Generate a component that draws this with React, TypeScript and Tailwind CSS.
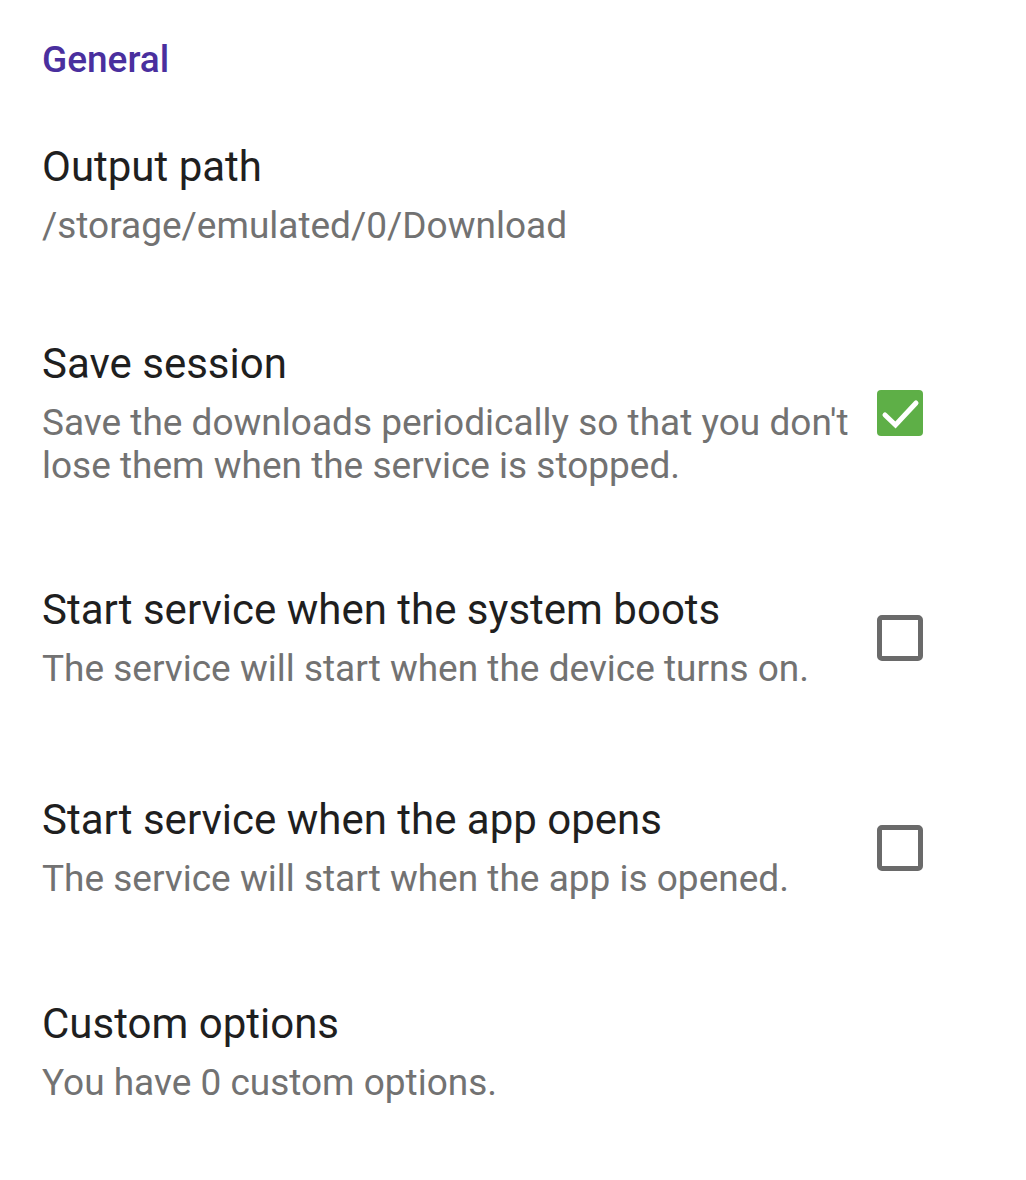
import React from "react";

function CheckBox({ checked }: { checked: boolean }) {
  if (checked) {
    return (
      <div className="w-[46px] h-[46px] rounded-[4px] bg-[#5eaf47]">
        <svg width="46" height="46" viewBox="0 0 46 46" fill="none">
          <path d="M8 25l10.5 10L39 13" stroke="#ffffff" strokeWidth="5" strokeLinecap="round" strokeLinejoin="miter" />
        </svg>
      </div>
    );
  }
  return <div className="w-[46px] h-[46px] rounded-[5px] border-[5px] border-[#6a6a6a] bg-white" />;
}

function Item({
  title,
  summary,
  checkbox,
  className,
}: {
  title: string;
  summary: React.ReactNode;
  checkbox?: boolean;
  className?: string;
}) {
  return (
    <div className={"flex items-center pl-[42px] pr-[103px] " + (className ?? "")}>
      <div className="flex-1 min-w-0">
        <div className="text-[42px] leading-[50px] text-[#1f1f1f]">{title}</div>
        <div className="mt-[12px] text-[37px] leading-[43px] text-[#727272]">{summary}</div>
      </div>
      {checkbox !== undefined && (
        <div className="ml-[18px] shrink-0">
          <CheckBox checked={checkbox} />
        </div>
      )}
    </div>
  );
}

export default function App() {
  return (
    <div
      className="w-[1026px] h-[1180px] bg-white overflow-hidden"
      style={{ fontFamily: "Roboto, 'Noto Sans', sans-serif" }}
    >
      <div className="pt-[38px] pl-[42px] text-[37px] leading-[44px] font-medium text-[#4a2f9e]">General</div>
      <Item className="mt-[60px]" title="Output path" summary="/storage/emulated/0/Download" />
      <Item
        className="mt-[92px]"
        title="Save session"
        summary="Save the downloads periodically so that you don't lose them when the service is stopped."
        checkbox={true}
      />
      <Item
        className="mt-[98px]"
        title="Start service when the system boots"
        summary="The service will start when the device turns on."
        checkbox={false}
      />
      <Item
        className="mt-[105px]"
        title="Start service when the app opens"
        summary="The service will start when the app is opened."
        checkbox={false}
      />
      <Item className="mt-[99px]" title="Custom options" summary="You have 0 custom options." />
    </div>
  );
}
